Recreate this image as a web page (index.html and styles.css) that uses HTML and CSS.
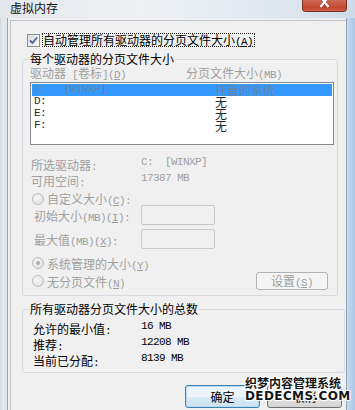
FILE: index.html
```html
<!DOCTYPE html>
<html lang="zh-CN">
<head>
    <meta charset="UTF-8">
    <meta name="viewport" content="width=device-width, initial-scale=1.0">
    <title>虚拟内存</title>
    <link rel="stylesheet" href="styles.css">
</head>
<body>
<div class="window">
    <div class="titlebar">
        <span class="title">虚拟内存</span>
        <div class="close">
            <svg width="43" height="11" viewBox="0 0 43 11">
                <path d="M17.5 -3 L25.5 7.5 M25.5 -3 L17.5 7.5" stroke="#6b2418" stroke-width="3.4" opacity="0.5"/>
                <path d="M17.5 -3 L25.5 7 M25.5 -3 L17.5 7" stroke="#ffffff" stroke-width="2.2"/>
            </svg>
        </div>
    </div>

    <div class="frame">
        <div class="edge-left"></div>
        <div class="client">
            <div class="page">
                <!-- 自动管理 -->
                <div class="auto-row">
                    <span class="checkbox">
                        <svg width="11" height="11" viewBox="0 0 11 11">
                            <path d="M2 5.5 L4.5 8 L9 2.5" fill="none" stroke="#4d5f8c" stroke-width="1.8"/>
                        </svg>
                    </span>
                    <span class="focus">自动管理所有驱动器的分页文件大小<span class="en">(<u>A</u>)</span></span>
                </div>

                <!-- 每个驱动器 -->
                <fieldset class="group drives">
                    <legend>每个驱动器的分页文件大小</legend>
                    <div class="list-head">
                        <span>驱动器<span class="en"> [</span>卷标<span class="en">](<u>D</u>)</span></span>
                        <span>分页文件大小<span class="en">(MB)</span></span>
                    </div>
                    <div class="listbox">
                        <div class="item selected"><span class="en">C:   [WINXP]</span><span>托管的系统</span></div>
                        <div class="item"><span class="en">D:</span><span>无</span></div>
                        <div class="item"><span class="en">E:</span><span>无</span></div>
                        <div class="item"><span class="en">F:</span><span>无</span></div>
                    </div>

                    <div class="info">
                        <div class="info-row"><span>所选驱动器<span class="en">:</span></span><span class="en">C:  [WINXP]</span></div>
                        <div class="info-row"><span>可用空间<span class="en">:</span></span><span class="en">17387 MB</span></div>
                    </div>

                    <div class="radio-row custom">
                        <span class="radio"></span>
                        <span>自定义大小<span class="en">(<u>C</u>):</span></span>
                    </div>
                    <div class="size-row">
                        <span>初始大小<span class="en">(MB)(<u>I</u>):</span></span>
                        <span class="input"></span>
                    </div>
                    <div class="size-row second">
                        <span>最大值<span class="en">(MB)(<u>X</u>):</span></span>
                        <span class="input"></span>
                    </div>

                    <div class="radio-row system">
                        <span class="radio on"></span>
                        <span>系统管理的大小<span class="en">(<u>Y</u>)</span></span>
                    </div>
                    <div class="bottom-row">
                        <div class="radio-row">
                            <span class="radio"></span>
                            <span>无分页文件<span class="en">(<u>N</u>)</span></span>
                        </div>
                        <span class="set-btn">设置<span class="en">(<u>S</u>)</span></span>
                    </div>
                </fieldset>

                <!-- 总数 -->
                <fieldset class="group totals">
                    <legend>所有驱动器分页文件大小的总数</legend>
                    <div class="total-row"><span>允许的最小值<span class="en">:</span></span><span class="en">16 MB</span></div>
                    <div class="total-row"><span>推荐<span class="en">:</span></span><span class="en">12208 MB</span></div>
                    <div class="total-row"><span>当前已分配<span class="en">:</span></span><span class="en">8139 MB</span></div>
                </fieldset>

                <div class="buttons">
                    <span class="btn default">确定</span>
                    <span class="btn">取消</span>
                </div>
            </div>
        </div>
        <div class="edge-right"></div>
    </div>

    <div class="watermark">
        <div class="wm-cn">织梦内容管理系统</div>
        <div class="wm-en">DEDECMS.COM</div>
    </div>
</div>
</body>
</html>
```

FILE: styles.css
```css
body {
    margin: 0;
    font-family: "Noto Sans CJK SC", sans-serif;
    font-size: 12px;
    color: #000;
    background: #fff;
}

.en {
    font-family: "Liberation Mono", monospace;
    font-size: 11px;
    letter-spacing: -0.6px;
    line-height: 1;
}

.window {
    position: relative;
    width: 355px;
    height: 410px;
    display: flex;
    flex-direction: column;
    background: #d6e1ec;
    overflow: hidden;
}

/* 标题栏 */
.titlebar {
    height: 18px;
    flex: none;
    display: flex;
    justify-content: space-between;
    align-items: flex-start;
    background: linear-gradient(90deg, #e4e8ec, #eef1f4 40%, #dfe7ef 80%, #cddbea);
}

.title {
    padding: 1px 0 0 10px;
    line-height: 14px;
    font-size: 12px;
    color: #111;
}

.close {
    width: 45px;
    height: 12px;
    margin-right: 8px;
    box-sizing: border-box;
    border: 1px solid #7e2f22;
    border-top: none;
    border-radius: 0 0 4px 4px;
    background: linear-gradient(#cf6a55, #c4462f 70%, #d0644f);
    overflow: hidden;
}

.close svg {
    display: block;
}

.frame {
    flex: 1;
    display: flex;
    min-height: 0;
}

.edge-left {
    width: 7px;
    background: linear-gradient(90deg, #d3d9df, #e6eaee 40%, #dfe4e9);
}

.edge-right {
    width: 8px;
    background: linear-gradient(90deg, #c9dbee, #aac6e4);
}

.client {
    flex: 1;
    display: flex;
    background: #f0f0f0;
    border-left: 1px solid #9aa4ae;
    border-right: 1px solid #8fa3b8;
    padding: 2px 0 0 2px;
}

.page {
    flex: 1;
    border-top: 1px solid #c2c6cc;
    border-left: 1px solid #c2c6cc;
}

/* 复选框 */
.auto-row {
    display: flex;
    align-items: center;
    gap: 2px;
    height: 14px;
    margin: 12px 0 0 16px;
}

.checkbox {
    width: 13px;
    height: 13px;
    box-sizing: border-box;
    border: 1px solid #8e8f8f;
    background: linear-gradient(135deg, #d8dde4, #f6f7f9);
    display: flex;
    align-items: center;
    justify-content: center;
}

.checkbox svg {
    display: block;
}

.focus {
    border: 1px dotted #222;
    line-height: 12px;
    height: 12px;
    padding-right: 1px;
}

/* 分组框 */
.group {
    margin: 5px 0 0 11px;
    padding: 0 0 5px 7px;
    border: 1px solid #d5dbe1;
    border-radius: 3px;
    box-sizing: border-box;
    min-width: 0;
}

.group legend {
    padding: 0 1px;
    margin-left: -1px;
    line-height: 14px;
    height: 14px;
}

.drives {
    width: 316px;
}

.list-head {
    display: grid;
    grid-template-columns: 156px 1fr;
    height: 14px;
    line-height: 14px;
    color: #a0a0a0;
}

.listbox {
    margin-top: 2px;
    width: 304px;
    height: 63px;
    box-sizing: border-box;
    border: 1px solid #828790;
    background: #fff;
    padding: 1px;
}

.item {
    display: grid;
    grid-template-columns: 181px 1fr;
    height: 12px;
    line-height: 12px;
    padding-left: 2px;
    color: #2a2a2a;
    white-space: pre;
}

.item.selected {
    background: #3399ff;
    color: #6a82a4;
}

.info {
    margin-top: 12px;
    padding-left: 1px;
    color: #a0a0a0;
}

.info-row {
    display: grid;
    grid-template-columns: 110px 1fr;
    height: 16px;
    line-height: 16px;
    white-space: pre;
}

/* 单选按钮 */
.radio-row {
    display: flex;
    align-items: center;
    gap: 3px;
    height: 13px;
    padding-left: 2px;
    color: #a0a0a0;
}

.radio-row.custom {
    margin-top: 3px;
}

.radio-row.system {
    margin-top: 6px;
    height: 16px;
}

.radio {
    width: 12px;
    height: 12px;
    box-sizing: border-box;
    border: 1px solid #bdbdbd;
    border-radius: 50%;
    background: radial-gradient(circle at 40% 40%, #f7f7f7, #dcdcdc);
    display: flex;
    align-items: center;
    justify-content: center;
}

.radio.on::after {
    content: "";
    width: 4px;
    height: 4px;
    border-radius: 50%;
    background: #a9a9a9;
}

.size-row {
    display: grid;
    grid-template-columns: 107px 74px;
    align-items: center;
    height: 20px;
    padding-left: 4px;
    color: #a0a0a0;
}

.size-row.second {
    margin-top: 4px;
}

.input {
    height: 20px;
    box-sizing: border-box;
    border: 1px solid #cacaca;
    border-radius: 2px;
    background: #f0f0f0;
}

.bottom-row {
    display: flex;
    justify-content: space-between;
    align-items: center;
    height: 18px;
    margin-top: 1px;
    padding-right: 9px;
}

.set-btn {
    width: 72px;
    height: 18px;
    box-sizing: border-box;
    border: 1px solid #adb2b5;
    border-radius: 3px;
    background: #f4f4f4;
    color: #a0a0a0;
    line-height: 16px;
    text-align: center;
}

/* 总数 */
.totals {
    width: 323px;
    margin-top: 6px;
    padding: 5px 0 3px 7px;
}

.total-row {
    display: grid;
    grid-template-columns: 108px 1fr;
    height: 16px;
    line-height: 16px;
    padding-left: 3px;
}

/* 按钮 */
.buttons {
    display: flex;
    gap: 7px;
    margin: 12px 0 0 174px;
}

.btn {
    width: 75px;
    height: 23px;
    box-sizing: border-box;
    border: 1px solid #707070;
    border-radius: 3px;
    background: linear-gradient(#f2f2f2 50%, #e2e2e2 50%, #d4d4d4);
    line-height: 21px;
    text-align: center;
}

.btn.default {
    border-color: #3c7fb1;
    background: linear-gradient(#edf5fb 50%, #d9ebf7 50%, #cbe3f4);
    box-shadow: inset 0 0 0 1px #b7def5;
}

/* 水印 */
.watermark {
    position: absolute;
    left: 245px;
    top: 376px;
    font-weight: 700;
    color: #151515;
    text-shadow: 1px 0 #fff, -1px 0 #fff, 0 1px #fff, 0 -1px #fff,
                 1px 1px #fff, -1px -1px #fff, 1px -1px #fff, -1px 1px #fff;
}

.wm-cn {
    font-size: 12px;
    line-height: 14px;
}

.wm-en {
    font-family: "DejaVu Sans", sans-serif;
    font-size: 12px;
    line-height: 13px;
    letter-spacing: 0.4px;
}
```
